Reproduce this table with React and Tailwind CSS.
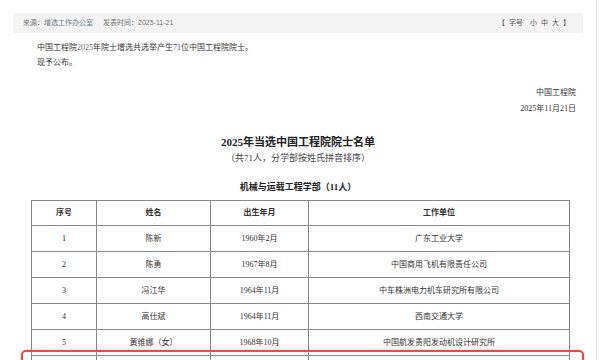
const rows = [
  { no: "1", name: "陈新", birth: "1960年2月", unit: "广东工业大学" },
  { no: "2", name: "陈勇", birth: "1967年8月", unit: "中国商用飞机有限责任公司" },
  { no: "3", name: "冯江华", birth: "1964年11月", unit: "中车株洲电力机车研究所有限公司" },
  { no: "4", name: "高仕斌", birth: "1964年11月", unit: "西南交通大学" },
  { no: "5", name: "黄维娜（女）", birth: "1968年10月", unit: "中国航发贵阳发动机设计研究所" },
];

const serifMix = "font-['Liberation_Serif','Noto_Sans_CJK_SC',serif]";

export default function App() {
  return (
    <div className="relative w-[600px] h-[360px] overflow-hidden bg-white flex">
      <div className="w-[597px] h-full border-r border-[#e2e2e2] px-[13px] pt-[13px]">
        {/* info bar */}
        <div className="h-[20px] bg-[#f3f3f3] flex items-center justify-between pl-[10px] pr-[13px] text-[7px] text-[#777] font-['Liberation_Sans','Noto_Sans_CJK_SC',sans-serif]">
          <div className="flex gap-[10px]">
            <span>
              来源：<span className="text-[#6b7a8f]">增选工作办公室</span>
            </span>
            <span>发表时间：2025-11-21</span>
          </div>
          <div className="flex gap-[4px] text-[#555]">
            <span>【</span>
            <span className="mr-[3px]">字号</span>
            <span>小</span>
            <span>中</span>
            <span>大</span>
            <span>】</span>
          </div>
        </div>

        {/* intro */}
        <div className={`mt-[7px] pl-[24px] text-[8px] leading-[15px] text-[#333] ${serifMix}`}>
          <p>
            中国工程院<span className="text-[#666]">2025</span>年院士增选共选举产生
            <span className="text-[#4b3f8f]">71</span>位中国工程院院士。
          </p>
          <p>现予公布。</p>
        </div>

        <div className={`mt-[15px] pr-[7px] text-right text-[8px] leading-[16px] text-[#333] ${serifMix}`}>
          <p>中国工程院</p>
          <p>2025年11月21日</p>
        </div>

        {/* title */}
        <h1 className={`mt-[17px] text-center text-[11px] leading-[16px] font-bold text-[#222] ${serifMix}`}>
          2025年当选中国工程院院士名单
        </h1>
        <p className={`mt-[1px] text-center text-[9px] leading-[14px] text-[#444] ${serifMix}`}>
          （共71人，分学部按姓氏拼音排序）
        </p>

        <h2 className={`mt-[15px] text-center text-[9px] leading-[14px] font-bold text-[#222] ${serifMix}`}>
          机械与运载工程学部（11人）
        </h2>

        {/* table */}
        <table className={`mt-[6px] ml-[18px] w-[538px] table-fixed border-collapse border border-[#555] text-[8px] text-[#333] ${serifMix}`}>
          <colgroup>
            <col className="w-[65px]" />
            <col className="w-[114px]" />
            <col className="w-[98px]" />
            <col className="w-[261px]" />
          </colgroup>
          <thead>
            <tr className="h-[25px]">
              <th className="border border-[#888] font-bold">序号</th>
              <th className="border border-[#888] font-bold">姓名</th>
              <th className="border border-[#888] font-bold">出生年月</th>
              <th className="border border-[#888] font-bold">工作单位</th>
            </tr>
          </thead>
          <tbody>
            {rows.map((r) => (
              <tr key={r.no} className="h-[26px]">
                <td className="border border-[#888] text-center">{r.no}</td>
                <td className="border border-[#888] text-center">{r.name}</td>
                <td className="border border-[#888] text-center">{r.birth}</td>
                <td className="border border-[#888] text-center">{r.unit}</td>
              </tr>
            ))}
            <tr className="h-[26px]">
              <td className="border border-[#888]" />
              <td className="border border-[#888]" />
              <td className="border border-[#888]" />
              <td className="border border-[#888]" />
            </tr>
          </tbody>
        </table>
      </div>

      {/* highlight */}
      <div className="absolute left-[21px] top-[350px] w-[563px] h-[30px] border-2 border-[#f04848] rounded-[5px] shadow-[0_0_2px_rgba(240,72,72,0.5)]" />
    </div>
  );
}
